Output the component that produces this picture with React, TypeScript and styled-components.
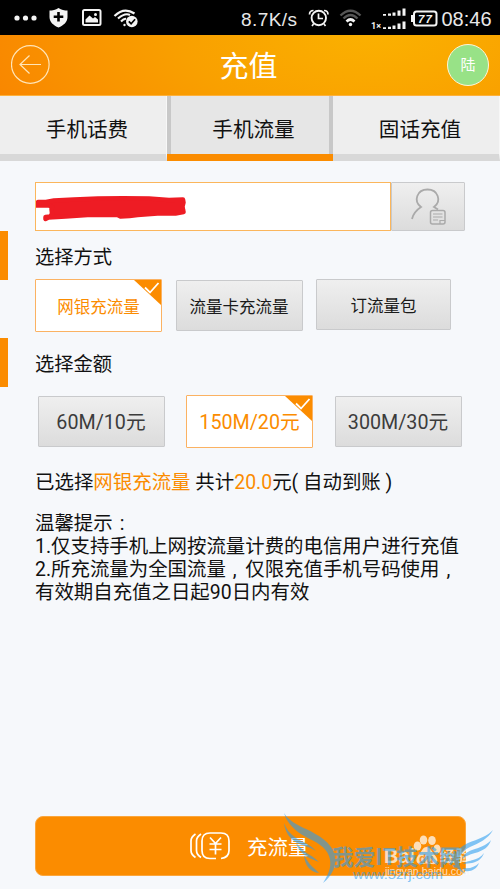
import React from "react";
import styled, { createGlobalStyle, css } from "styled-components";

const ORANGE = "#fb8c00";
const SANS = `Roboto, "Noto Sans CJK SC", sans-serif`;

const GlobalStyle = createGlobalStyle`
  * { box-sizing: border-box; }
  body { margin: 0; background: #f6f8fb; font-family: ${SANS}; }
`;

const Screen = styled.div`
  position: relative;
  display: flex;
  flex-direction: column;
  width: 500px;
  height: 889px;
  overflow: hidden;
  background: #f6f8fb;
  color: #111;
`;

const StatusBar = styled.div`
  display: flex;
  height: 35px;
  flex: none;
  background: #000;
  svg { display: block; }
`;

const Header = styled.header`
  display: flex;
  align-items: center;
  justify-content: space-between;
  height: 61px;
  flex: none;
  padding: 0 11px;
  border-bottom: 1px solid #fdb13c;
  background: radial-gradient(ellipse 440px 220px at 375px -10px, #fbb200 0%, #f9a000 45%, #f98200 100%);
`;

const Title = styled.h1`
  margin: 3px 3px 0 0;
  color: #fff;
  font-size: 29px;
  line-height: 40px;
  font-weight: 400;
`;

const Avatar = styled.div`
  display: grid;
  place-items: center;
  width: 42px;
  height: 42px;
  border: 1px solid #fff5d8;
  border-radius: 50%;
  background: #98e287;
  color: #fff;
  font-size: 15px;
  line-height: 20px;
`;

const Back = styled.button`
  width: 42px;
  height: 42px;
  padding: 0;
  border: 0;
  background: none;
  svg { display: block; }
`;

const Tabs = styled.nav`
  display: grid;
  grid-template-columns: 167px 166px 167px;
  height: 65px;
  flex: none;
`;

const Tab = styled.div<{ $active?: boolean }>`
  display: flex;
  align-items: center;
  justify-content: center;
  padding-top: 5px;
  padding-left: 8px;
  font-size: 20.6px;
  background: #eee;
  border-bottom: 7px solid #d8d8d8;
  border-right: 1px solid #f7f7f7;
  ${(p) =>
    p.$active &&
    css`
      background: linear-gradient(90deg, #c8c8c8 4px, #e6e6e6 4px, #e6e6e6 162px, #c8c8c8 162px);
      border-bottom-color: ${ORANGE};
      border-right: 0;
      padding-left: 7px;
    `}
`;

const Content = styled.main`
  display: flex;
  flex-direction: column;
  height: 655px;
  padding-top: 21px;
`;

const PhoneRow = styled.div`
  display: flex;
  height: 49px;
  margin-left: 35px;
`;

const PhoneField = styled.div`
  width: 356px;
  border: 1px solid #fbb65c;
  background: #fff;
  svg { display: block; }
`;

const grayFace = css`
  border: 1px solid #c9cacc;
  background: linear-gradient(#efefef, #dcdcdc);
  border-radius: 1px;
`;

const ContactButton = styled.button`
  width: 74px;
  padding: 0;
  ${grayFace}
  svg { display: block; }
`;

const SectionHead = styled.h2<{ $gap: number }>`
  display: flex;
  align-items: center;
  height: 49px;
  margin: ${(p) => p.$gap}px 0 0;
  padding-left: 27px;
  border-left: 8px solid ${ORANGE};
  font-size: 19.3px;
  font-weight: 400;
`;

const Options = styled.div<{ $left: number; $gap: number; $top: number }>`
  display: flex;
  align-items: center;
  height: 53px;
  margin: ${(p) => p.$top}px 0 0 ${(p) => p.$left}px;
  gap: ${(p) => p.$gap}px;
`;

const OptionBox = styled.button<{ $selected?: boolean; $wide?: boolean; $big?: boolean }>`
  position: relative;
  display: flex;
  align-items: center;
  justify-content: center;
  width: ${(p) => (p.$wide ? 135 : 127)}px;
  height: 51px;
  padding: ${(p) => (p.$big ? "0 0 3px" : "1px 0 0")};
  font: 400 ${(p) => (p.$big ? 19.7 : 16.5)}px ${SANS};
  color: ${(p) => (p.$big ? "#3c3c3c" : "#1a1a1a")};
  ${grayFace}
  ${(p) => p.$wide && "align-self: flex-start;"}
  ${(p) =>
    p.$selected &&
    css`
      height: 53px;
      border-color: #fbb262;
      background: #fff;
      color: ${ORANGE};
    `}
`;

const Corner = styled.svg`
  position: absolute;
  top: 0;
  right: 0;
`;

const Summary = styled.p`
  margin: 22px 0 0 35px;
  font-size: 19.45px;
  line-height: 26px;
  white-space: pre;
  em { font-style: normal; color: ${ORANGE}; }
`;

const Tips = styled.div`
  margin: 16px 0 0 35px;
  font-size: 19.43px;
  line-height: 23px;
  p { margin: 0; height: 23px; white-space: nowrap; }
`;

const Mark = styled.span`
  display: inline-block;
  width: 19.4px;
  padding-left: 7px;
`;

const Submit = styled.button`
  display: flex;
  align-items: center;
  width: 431px;
  height: 60px;
  flex: none;
  margin: 0 0 0 35px;
  padding: 0 0 0 153px;
  gap: 16px;
  border: 1px solid #fba63c;
  border-radius: 8px;
  background: ${ORANGE};
  color: #fff;
  font: 400 20.5px ${SANS};
`;

const Watermark = styled.svg`
  position: absolute;
  left: 270px;
  top: 805px;
`;

const StatusIcons = () => (
  <svg width="500" height="35" viewBox="0 0 500 35" fill="none" stroke="#f4f4f4">
    <g fill="#f4f4f4" stroke="none">
      <circle cx="17" cy="18" r="2.6" />
      <circle cx="25.5" cy="18" r="2.6" />
      <circle cx="34" cy="18" r="2.6" />
      <path d="M58.500 8C55.500 10 52.500 10.500 49.500 10.500V17c0 5 4 8.500 9 10.500 5-2 9-5.500 9-10.500v-6.500C64.500 10.500 61.500 10 58.500 8Z" />
    </g>
    <path d="M58.500 12v9.500M53.700 16.800h9.600" stroke="#000" strokeWidth="2.6" />
    <rect x="83" y="10" width="17.5" height="15" rx="1.5" strokeWidth="2" />
    <path d="M85.500 22.500v-3l4-4 3.500 3 2-1.500 3 2.500v3Z" fill="#f4f4f4" stroke="none" />
    <circle cx="95.5" cy="14.5" r="1.5" fill="#f4f4f4" stroke="none" />
    <path d="M114.500 16Q124 6.500 134.500 13.500M118 18.500Q125 12.500 130 15M121 21.500q3-3 5-2.500" strokeWidth="2.2" />
    <circle cx="124.5" cy="25" r="1.2" fill="#f4f4f4" stroke="none" />
    <circle cx="131.8" cy="21.5" r="5.8" fill="#f4f4f4" stroke="none" />
    <path d="m128.800 21.300 2.300 2.400 4-4.500" stroke="#000" strokeWidth="1.7" />
    <text x="241" y="25.5" fontFamily="Liberation Sans, sans-serif" fontSize="19" textLength="56" fill="#e8e8e8" stroke="none">8.7K/s</text>
    <circle cx="318.8" cy="18" r="7.2" strokeWidth="1.9" />
    <path d="M318.500 13.500v5h4.500M309.500 14.500q0-4 4-4M328 14.500q0-4-4-4M313.500 24l-1.500 2M324 24l1.500 2" strokeWidth="1.7" />
    <path d="M340.500 15.500Q350.500 6 360.500 15.500M343.500 18.500q7-7 14 0" stroke="#555" strokeWidth="2.4" />
    <path d="M346.500 21.500q4-4 8 0" strokeWidth="2.6" />
    <circle cx="350.5" cy="24.5" r="1.7" fill="#f4f4f4" stroke="none" />
    <g fill="#f4f4f4" stroke="none">
      <path d="M383 14h3v1.800h-3ZM388 13.500h3v2.300h-3ZM392.500 12.500h3v3.300h-3ZM397.500 10.500h3v5.300h-3ZM402.500 8.500h3v7.300h-3Z" />
      <path d="M383 27.200h3V29h-3ZM388 26.700h3V29h-3ZM392.500 25.500h3V29h-3ZM397.500 23.500h3V29h-3ZM402.500 21.500h3V29h-3Z" />
      <text x="371" y="29" fontFamily="Roboto" fontWeight="700" fontSize="9">1×</text>
      <path d="M411 15h2v7h-2Z" />
      <text x="418" y="23.3" fontFamily="Liberation Sans" fontWeight="700" fontStyle="italic" fontSize="11.5" textLength="14">77</text>
      <text x="441.500" y="26" fontFamily="Liberation Sans, sans-serif" fontSize="20" textLength="50" fill="#e8e8e8">08:46</text>
    </g>
    <rect x="414" y="11.5" width="22.5" height="14" rx="2.5" strokeWidth="2" />
  </svg>
);

const SelectedCorner = () => (
  <Corner width="28" height="25" viewBox="0 0 28 25">
    <path d="M1 0H28V25Z" fill={ORANGE} />
    <path d="m12 7.500 5 5 8.500-9.500" fill="none" stroke="#fff" strokeWidth="1.8" />
  </Corner>
);

type OptionProps = { label: string; selected?: boolean; wide?: boolean; big?: boolean };

const Option = ({ label, selected, wide, big }: OptionProps) => (
  <OptionBox $selected={selected} $wide={wide} $big={big}>
    {label}
    {selected && <SelectedCorner />}
  </OptionBox>
);

const WatermarkArt = () => (
  <Watermark width="230" height="84" viewBox="270 805 230 84">
    <g fill="#fff" opacity=".72">
      <ellipse cx="417.5" cy="846" rx="3.8" ry="4.6" />
      <ellipse cx="423.5" cy="840" rx="3.8" ry="4.6" />
      <ellipse cx="432" cy="840.5" rx="3.8" ry="4.6" />
      <ellipse cx="437" cy="849" rx="3.6" ry="4.6" />
      <path d="M426.500 847c4 0 6 6 9 9 4 5 1 9-4 8-3-.6-6-.6-9 0-6 1-8-4-4-9 3-3 4-8 8-8Z" />
      <text x="384" y="863" fontFamily="Liberation Sans" fontWeight="700" fontSize="21" textLength="31" lengthAdjust="spacingAndGlyphs">Bai</text>
      <text x="419" y="862.5" fontFamily="Liberation Sans" fontWeight="700" fontSize="12" fill="#f29b36">du</text>
      <text x="440" y="861" fontFamily="Noto Sans CJK SC" fontWeight="700" fontSize="15" textLength="31">经验</text>
      <text x="385" y="875" fontFamily="Liberation Sans" fontSize="10.5" textLength="86" lengthAdjust="spacingAndGlyphs">jingyan.baidu.com</text>
    </g>
    <g fill="#2a9df0" opacity=".58">
      <text x="332" y="864.500" fontFamily="Noto Sans CJK SC" fontWeight="700" fontSize="22" textLength="129" lengthAdjust="spacingAndGlyphs">我爱IT技术网</text>
      <text x="353" y="879" fontFamily="Liberation Sans" fontSize="13.5" textLength="90" lengthAdjust="spacingAndGlyphs">www.5zrj.com</text>
      <path d="M284 813c4 7 13 12 22 16 13 6 25 14 28 24 4 12-2 23-11 30 7-11 9-19 6-27-3-9-13-14-23-19-11-6-19-14-22-24Z" />
      <path d="M284 823c1 9 6 16 13 20 7 3 13 4 19 8-5-6-13-9-20-13-6-4-10-9-12-15Z" />
      <path d="M296 843c3 9 9 14 23 19-6-6-12-8-16-12Z" />
      <path d="M304 855c1 11 6 17 15 18l-4-4c-4-3-8-8-11-14Z" />
      <path d="M493 830c-5 9-14 13-23 17-8 4-12 10-11 17 1 5 4 8 7 10-7-3-12-8-12-14 0-8 6-13 14-17 10-4 20-7 25-13Z" />
      <path d="M491 840c-2 7-8 11-16 13-6 2-10 3-13 6 2-6 7-8 13-10 7-2 13-5 16-9Z" />
      <path d="M484 853c-2 6-7 9-12 10l-9 1c3-3 7-3 10-4 4-1 8-3 11-7Z" />
      <path d="M479 863c-2 6-8 9-14 8l-2-3c7 1 12-1 16-5Z" />
    </g>
  </Watermark>
);

export default function App() {
  return (
    <Screen>
      <GlobalStyle />
      <StatusBar><StatusIcons /></StatusBar>
      <Header>
        <Back aria-label="返回">
          <svg width="42" height="42" fill="none" stroke="#ffe5b8" strokeWidth="1.2">
            <circle cx="19.3" cy="20.5" r="18.8" />
            <path d="M18.500 11.500 9 20.500l9.500 9M9 20.500h21" />
          </svg>
        </Back>
        <Title>充值</Title>
        <Avatar>陆</Avatar>
      </Header>
      <Tabs>
        <Tab>手机话费</Tab>
        <Tab $active>手机流量</Tab>
        <Tab>固话充值</Tab>
      </Tabs>
      <Content>
        <PhoneRow>
          <PhoneField>
            <svg width="160" height="47" viewBox="36 183 160 47">
              <path
                d="M38 202h8l8-1.500 20-1q35-2 75-1l20 1.500 14-.5.5 3-1 4 .5 3 .5 2.500-8 1.500h-18l-20 1.500-8 1-9 .5-3-1.500h-30l-22 1.500-17 1-3 1.500v-2l5-.5 1.500-3-.5-4.500 1-2-4-1.500h-14Z"
                fill="#ee1c24"
                stroke="#ee1c24"
                strokeWidth="4.500"
                strokeLinejoin="round"
              />
            </svg>
          </PhoneField>
          <ContactButton aria-label="通讯录">
            <svg width="72" height="47" viewBox="392 183 72 47" fill="none" stroke="#aaa" strokeWidth="1.8">
              <path d="M412 219q1.500-7 9-12c-8-6-4-17.500 6.500-17.500s14.500 11.500 6.500 17.500l4 2.500" />
              <rect x="430.5" y="210.5" width="14.5" height="13.5" rx="2" strokeWidth="1.5" />
              <path d="M433 214h9.500M433 217h9.500M433 220h5M440 224v-3.500h5" strokeWidth="1.2" />
            </svg>
          </ContactButton>
        </PhoneRow>
        <SectionHead $gap={0}>选择方式</SectionHead>
        <Options $left={35} $gap={13.5} $top={-1}>
          <Option label="网银充流量" selected />
          <Option label="流量卡充流量" />
          <Option label="订流量包" wide />
        </Options>
        <SectionHead $gap={6}>选择金额</SectionHead>
        <Options $left={37.5} $gap={21.5} $top={8}>
          <Option label="60M/10元" big />
          <Option label="150M/20元" big selected />
          <Option label="300M/30元" big />
        </Options>
        <Summary>已选择<em>网银充流量</em> 共计<em>20.0</em>元( 自动到账 )</Summary>
        <Tips>
          <p>温馨提示<Mark>:</Mark></p>
          <p>1.仅支持手机上网按流量计费的电信用户进行充值</p>
          <p>2.所充流量为全国流量<Mark>,</Mark>仅限充值手机号码使用<Mark>,</Mark></p>
          <p>有效期自充值之日起90日内有效</p>
        </Tips>
      </Content>
      <Submit>
        <svg width="42" height="28" viewBox="0 0 42 28" fill="none" stroke="#fff" strokeWidth="1.7">
          <path d="M27 26.500H21q-8 0-8-8V9q0-8 8-8h11q8 0 8 8v9.500q0 7-8 8" />
          <path d="M12 2Q7.500 5 7.500 9v9.500q0 4 4.500 7M6.500 2Q2 5 2 9v9.500q0 4 4.500 7" />
          <path d="m21 5.500 5.500 6 5.500-6M26.500 11.500v11M20.500 12h12M20.500 17.500h12" />
        </svg>
        充流量
      </Submit>
      <WatermarkArt />
    </Screen>
  );
}
